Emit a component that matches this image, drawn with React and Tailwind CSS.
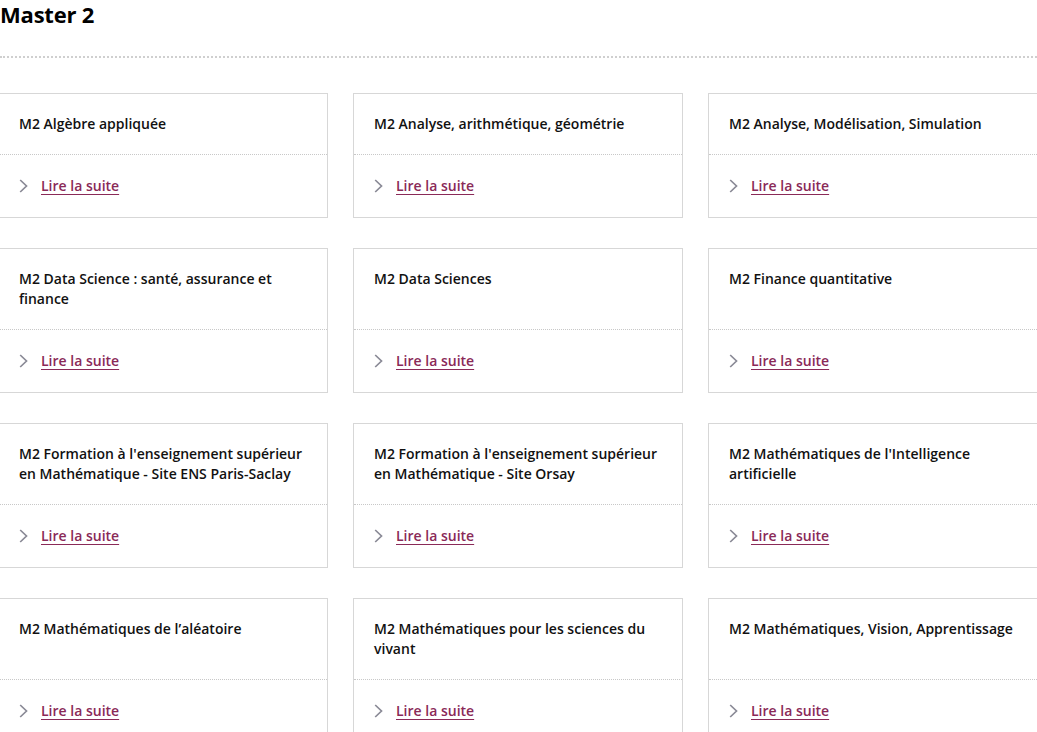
import React from "react";

const items = [
  "M2 Algèbre appliquée",
  "M2 Analyse, arithmétique, géométrie",
  "M2 Analyse, Modélisation, Simulation",
  "M2 Data Science : santé, assurance et finance",
  "M2 Data Sciences",
  "M2 Finance quantitative",
  "M2 Formation à l'enseignement supérieur en Mathématique - Site ENS Paris-Saclay",
  "M2 Formation à l'enseignement supérieur en Mathématique - Site Orsay",
  "M2 Mathématiques de l'Intelligence artificielle",
  "M2 Mathématiques de l’aléatoire",
  "M2 Mathématiques pour les sciences du vivant",
  "M2 Mathématiques, Vision, Apprentissage",
];

function Chevron() {
  return (
    <svg width="9" height="14" viewBox="0 0 9 14" className="shrink-0">
      <path d="M1.2 1 L7.5 7 L1.2 13" fill="none" stroke="#8a8a96" strokeWidth="1.7" />
    </svg>
  );
}

function Card({ title }) {
  return (
    <div className="flex flex-col border border-[#d7d7d7] bg-white">
      <div className="flex-1 px-5 py-5 text-[14px] leading-[20px] font-semibold text-[#111]">
        {title}
      </div>
      <div className="border-t border-dotted border-[#c8c8c8] px-5 py-[21px] flex items-center">
        <Chevron />
        <a
          href="#"
          className="ml-[13px] text-[14px] leading-[20px] font-semibold text-[#8a2a58] underline decoration-[1px] underline-offset-[3px]"
        >
          Lire la suite
        </a>
      </div>
    </div>
  );
}

export default function App() {
  return (
    <div
      className="w-[1037px] h-[732px] overflow-hidden bg-white"
      style={{ fontFamily: '"Open Sans", "Liberation Sans", sans-serif' }}
    >
      <h1 className="text-[22px] leading-[26px] font-bold text-black pt-[1px] tracking-[-0.2px]">Master 2</h1>
      <div className="mt-[29px] border-t-2 border-dotted border-[#cfcfcf]" />
      <div className="ml-[-2px] mt-[35px] w-[1040px] grid grid-cols-[330px_330px_330px] gap-x-[25px] gap-y-[30px]">
        {items.map((t) => (
          <Card key={t} title={t} />
        ))}
      </div>
    </div>
  );
}
